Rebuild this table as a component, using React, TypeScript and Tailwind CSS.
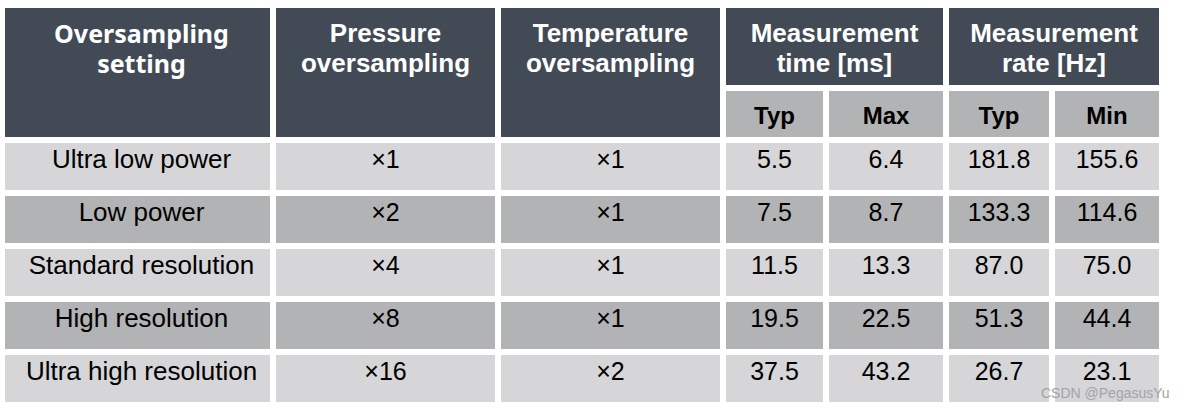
const rows = [
  { name: "Ultra low power", p: "×1", t: "×1", typ: "5.5", max: "6.4", rtyp: "181.8", min: "155.6", dark: false },
  { name: "Low power", p: "×2", t: "×1", typ: "7.5", max: "8.7", rtyp: "133.3", min: "114.6", dark: true },
  { name: "Standard resolution", p: "×4", t: "×1", typ: "11.5", max: "13.3", rtyp: "87.0", min: "75.0", dark: false },
  { name: "High resolution", p: "×8", t: "×1", typ: "19.5", max: "22.5", rtyp: "51.3", min: "44.4", dark: true },
  { name: "Ultra high resolution", p: "×16", t: "×2", typ: "37.5", max: "43.2", rtyp: "26.7", min: "23.1", dark: false },
];

const head = "bg-[#424a56] text-white font-bold text-center text-[26px] leading-[30px] pt-[10px]";
const sub = "bg-[#b2b3b5] text-black font-bold text-center text-[24px] pt-[3px] flex items-center justify-center";

const App = () => {
  return (
    <div className="relative w-[1184px] h-[410px] bg-white pt-2 pl-[5px] font-['Liberation_Sans',Arial,sans-serif]">
      <div className="grid grid-cols-[265px_219px_219px_97px_114px_100px_104px] grid-rows-[77px_46px_47px_47px_47px_47px_47px] gap-[6px]">
        <div className={`${head} row-span-2 pl-2 font-['Noto_Sans',sans-serif] !text-[25px]`}>
          Oversampling
          <br />
          setting
        </div>
        <div className={`${head} row-span-2`}>
          Pressure
          <br />
          oversampling
        </div>
        <div className={`${head} row-span-2`}>
          Temperature
          <br />
          oversampling
        </div>
        <div className={`${head} col-span-2`}>
          Measurement
          <br />
          time [ms]
        </div>
        <div className={`${head} col-span-2`}>
          Measurement
          <br />
          rate [Hz]
        </div>
        <div className={sub}>Typ</div>
        <div className={sub}>Max</div>
        <div className={sub}>Typ</div>
        <div className={sub}>Min</div>

        {rows.map((r) => {
          const bg = r.dark ? "bg-[#b2b3b5]" : "bg-[#d6d6d8]";
          const cell = `${bg} text-black text-center text-[25px] leading-[28px] pt-[2px]`;
          return [
            <div key={r.name + "n"} className={`${cell} pl-2 !text-[26px]`}>{r.name}</div>,
            <div key={r.name + "p"} className={cell}>{r.p}</div>,
            <div key={r.name + "t"} className={cell}>{r.t}</div>,
            <div key={r.name + "a"} className={cell}>{r.typ}</div>,
            <div key={r.name + "b"} className={cell}>{r.max}</div>,
            <div key={r.name + "c"} className={cell}>{r.rtyp}</div>,
            <div key={r.name + "d"} className={cell}>{r.min}</div>,
          ];
        })}
      </div>
      <div className="absolute left-[1041px] top-[383px] text-[14px] text-[#a3a3a3] font-['Liberation_Sans',Arial,sans-serif]">
        CSDN @PegasusYu
      </div>
    </div>
  );
};

export default App;
